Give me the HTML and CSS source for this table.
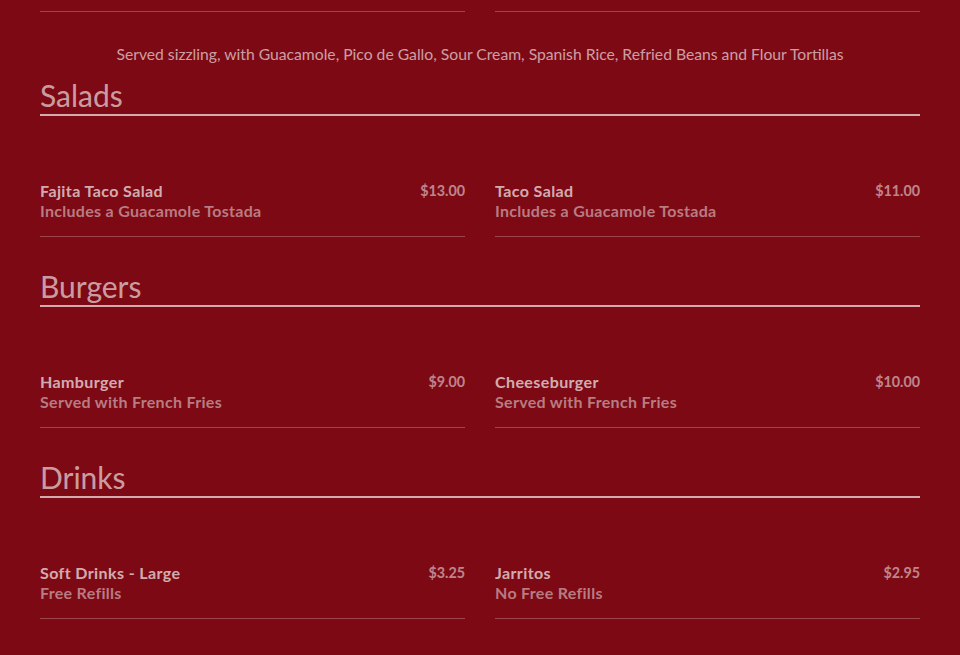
FILE: index.html
```html
<!DOCTYPE html>
<html lang="en">
<head>
<meta charset="utf-8">
<title>Menu</title>
<link rel="stylesheet" href="styles.css">
</head>
<body>
<main class="menu">
  <section class="section section-fajitas">
    <div class="items items-tail">
      <div class="item item-tail"></div>
      <div class="item item-tail"></div>
    </div>
    <p class="note">Served sizzling, with Guacamole, Pico de Gallo, Sour Cream, Spanish Rice, Refried Beans and Flour Tortillas</p>
  </section>

  <section class="section">
    <h2 class="section-title">Salads</h2>
    <div class="items">
      <div class="item">
        <div class="item-head"><span class="item-name">Fajita Taco Salad</span><span class="item-price">$13.00</span></div>
        <div class="item-desc">Includes a Guacamole Tostada</div>
      </div>
      <div class="item">
        <div class="item-head"><span class="item-name">Taco Salad</span><span class="item-price">$11.00</span></div>
        <div class="item-desc">Includes a Guacamole Tostada</div>
      </div>
    </div>
  </section>

  <section class="section">
    <h2 class="section-title">Burgers</h2>
    <div class="items">
      <div class="item">
        <div class="item-head"><span class="item-name">Hamburger</span><span class="item-price">$9.00</span></div>
        <div class="item-desc">Served with French Fries</div>
      </div>
      <div class="item">
        <div class="item-head"><span class="item-name">Cheeseburger</span><span class="item-price">$10.00</span></div>
        <div class="item-desc">Served with French Fries</div>
      </div>
    </div>
  </section>

  <section class="section">
    <h2 class="section-title">Drinks</h2>
    <div class="items">
      <div class="item">
        <div class="item-head"><span class="item-name">Soft Drinks - Large</span><span class="item-price">$3.25</span></div>
        <div class="item-desc">Free Refills</div>
      </div>
      <div class="item">
        <div class="item-head"><span class="item-name">Jarritos</span><span class="item-price">$2.95</span></div>
        <div class="item-desc">No Free Refills</div>
      </div>
    </div>
  </section>
</main>
</body>
</html>
```
FILE: styles.css
```css
html, body {
  margin: 0;
  padding: 0;
  background: #7d0915;
}
body {
  font-family: Lato, "Noto Sans", sans-serif;
  color: rgba(255, 255, 255, 0.7);
  overflow: hidden;
}
.menu {
  margin: 0 40px;
  width: 880px;
}
.items {
  display: grid;
  grid-template-columns: 1fr 1fr;
  column-gap: 30px;
}
.item {
  padding: 0 0 15px;
  border-bottom: 1px solid rgba(255, 255, 255, 0.25);
}
.item-tail {
  height: 11px;
  padding: 0;
}
.note {
  margin: 30px 0 0;
  text-align: center;
  font-size: 15.7px;
  line-height: 24px;
  color: rgba(255, 255, 255, 0.62);
}
.section-title {
  margin: 30px 0 0;
  font-size: 30px;
  font-weight: 400;
  line-height: 38px;
  color: rgba(255, 255, 255, 0.62);
  border-bottom: 2px solid rgba(255, 255, 255, 0.66);
}
.section-fajitas + .section .section-title {
  margin-top: 10px;
}
.section-title + .items {
  margin-top: 65px;
}
.item-head {
  display: flex;
  justify-content: space-between;
  align-items: center;
  height: 20px;
}
.item-name {
  font-weight: 700;
  font-size: 16px;
  letter-spacing: 0.4px;
  line-height: 20px;
  color: rgba(255, 255, 255, 0.68);
}
.item-price {
  font-weight: 700;
  font-size: 14.3px;
  line-height: 20px;
  color: rgba(255, 255, 255, 0.52);
}
.item-desc {
  font-weight: 700;
  font-size: 16px;
  letter-spacing: 0.3px;
  line-height: 20px;
  color: rgba(255, 255, 255, 0.47);
}
```
